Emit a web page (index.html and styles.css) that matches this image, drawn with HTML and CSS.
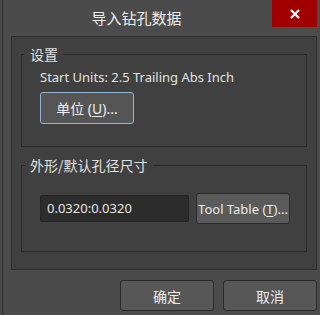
FILE: index.html
```html
<!DOCTYPE html>
<html>
<head>
<meta charset="utf-8">
<link rel="stylesheet" href="styles.css">
</head>
<body>
<div class="window">
  <div class="titlebar">
    <div class="title">导入钻孔数据</div>
    <div class="close">
      <svg width="10" height="10" viewBox="0 0 10 10"><path d="M1 1 L9 9 M9 1 L1 9" stroke="#ffffff" stroke-width="2.2" fill="none"/></svg>
    </div>
  </div>
  <div class="panel">
    <div class="group g1">
      <span class="group-label">设置</span>
      <div class="info">Start Units: 2.5 Trailing Abs Inch</div>
      <button class="btn btn-focus">单位 (<u>U</u>)...</button>
    </div>
    <div class="group g2">
      <span class="group-label">外形/默认孔径尺寸</span>
      <div class="row">
        <div class="input">0.0320:0.0320</div>
        <button class="btn btn-tool">Tool Table (<u>T</u>)...</button>
      </div>
    </div>
  </div>
  <div class="footer">
    <button class="btn btn-foot">确定</button>
    <button class="btn btn-foot">取消</button>
  </div>
</div>
</body>
</html>
```

FILE: styles.css
```css
html, body {
  margin: 0;
  padding: 0;
  background: #4b4b4b;
  width: 320px;
  height: 315px;
  overflow: hidden;
  font-family: "Noto Sans", "Noto Sans CJK SC", sans-serif;
  color: #e6e6e6;
}
.window {
  margin-left: 2px;
  border-left: 1px solid #2e2e2e;
  padding-left: 8px;
  width: 306px;
  height: 315px;
}
.titlebar {
  height: 36px;
  display: flex;
  align-items: flex-start;
}
.title {
  flex: 1;
  text-align: center;
  line-height: 36px;
  font-size: 15px;
  padding-right: 10px;
  font-family: "Noto Sans CJK SC", sans-serif;
  color: #ececec;
}
.close {
  width: 45px;
  height: 27px;
  background: #a00000;
  display: flex;
  align-items: center;
  justify-content: center;
}
.panel {
  background: #404040;
  border: 1px solid #2f2f2f;
  padding: 17px 9px;
}
.group {
  position: relative;
  border: 1px solid #2a2a2a;
}
.g1 {
  height: 91px;
  padding: 13px 0 0 18px;
  box-sizing: border-box;
  height: 93px;
}
.g2 {
  margin-top: 18px;
  padding: 27px 0 27px 18px;
}
.group-label {
  position: absolute;
  top: -11px;
  left: 3px;
  padding: 0 5px;
  background: #404040;
  font-size: 14px;
  line-height: 20px;
  font-family: "Noto Sans CJK SC", sans-serif;
  color: #e0e0e0;
}
.info {
  font-size: 13px;
  line-height: 18px;
  color: #e2e2e2;
}
.btn {
  font-family: "Noto Sans", "Noto Sans CJK SC", sans-serif;
  color: #ececec;
  background: #585858;
  border: 1px solid #2a2a2a;
  border-radius: 3px;
  padding: 0;
  font-size: 13px;
}
.btn u {
  text-decoration-thickness: 1px;
  text-underline-offset: 2px;
}
.btn-focus {
  margin-top: 6px;
  width: 94px;
  height: 32px;
  border-color: #8fb3d9;
  background: #555555;
  font-size: 14px;
}
.row {
  display: flex;
  align-items: center;
  gap: 7px;
}
.input {
  width: 149px;
  height: 27px;
  box-sizing: border-box;
  background: #2c2c2c;
  border: 1px solid #252525;
  border-radius: 2px;
  padding-left: 6px;
  font-size: 13px;
  line-height: 25px;
  color: #e6e6e6;
}
.btn-tool {
  width: 94px;
  height: 31px;
  background: #5a5a5a;
}
.footer {
  display: flex;
  justify-content: flex-end;
  gap: 9px;
  margin-top: 10px;
}
.btn-foot {
  width: 94px;
  height: 31px;
  font-size: 14px;
  font-family: "Noto Sans CJK SC", sans-serif;
  background: #575757;
}
```
